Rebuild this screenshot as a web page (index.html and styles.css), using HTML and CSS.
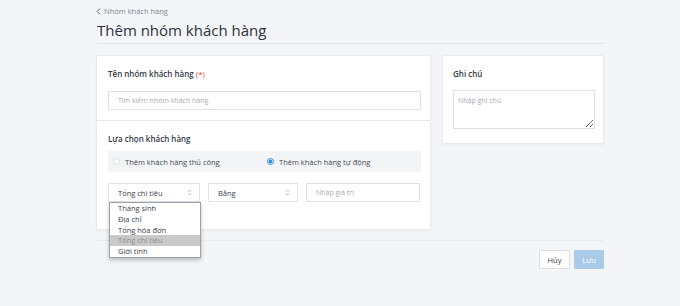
FILE: index.html
```html
<!DOCTYPE html>
<html lang="vi">
<head>
  <meta charset="UTF-8">
  <title>Thêm nhóm khách hàng</title>
  <meta name="viewport" content="width=device-width, initial-scale=1.0">
  <link rel="stylesheet" href="styles.css">
</head>
<body>
  <div class="page">
    <a href="#" class="crumb">
      <svg width="5" height="7" viewBox="0 0 5 7"><path d="M4 0.6 L1.2 3.5 L4 6.4" fill="none" stroke="#5c6470" stroke-width="1"/></svg>
      Nhóm khách hàng
    </a>
    <h1 class="title">Thêm nhóm khách hàng</h1>

    <div class="layout">
      <div class="card main-card">
        <div class="section">
          <div class="label">Tên nhóm khách hàng <span class="req">(*)</span></div>
          <input type="text" class="field" placeholder="Tìm kiếm nhóm khách hàng">
        </div>
        <div class="section">
          <div class="label">Lựa chọn khách hàng</div>
          <div class="radio-box">
            <label class="radio"><span class="dot"></span>Thêm khách hàng thủ công</label>
            <label class="radio checked"><span class="dot"></span>Thêm khách hàng tự động</label>
          </div>
          <div class="filter-row">
            <div class="select sel-field">
              <span>Tổng chi tiêu</span>
              <svg width="5" height="7" viewBox="0 0 5 7"><path d="M1 2.6 L2.5 1 L4 2.6 M1 4.4 L2.5 6 L4 4.4" fill="none" stroke="#9aa0a8" stroke-width="0.8"/></svg>
              <ul class="options">
                <li>Tháng sinh</li>
                <li>Địa chỉ</li>
                <li>Tổng hóa đơn</li>
                <li class="active">Tổng chi tiêu</li>
                <li>Giới tính</li>
              </ul>
            </div>
            <div class="select sel-op">
              <span>Bằng</span>
              <svg width="5" height="7" viewBox="0 0 5 7"><path d="M1 2.6 L2.5 1 L4 2.6 M1 4.4 L2.5 6 L4 4.4" fill="none" stroke="#9aa0a8" stroke-width="0.8"/></svg>
            </div>
            <input type="text" class="field value" placeholder="Nhập giá trị">
          </div>
        </div>
      </div>

      <div class="card note-card">
        <div class="label">Ghi chú</div>
        <textarea class="note" placeholder="Nhập ghi chú"></textarea>
      </div>
    </div>

    <div class="actions">
      <button class="btn cancel">Hủy</button>
      <button class="btn save">Lưu</button>
    </div>
  </div>
</body>
</html>
```

FILE: styles.css
```css
body {
  margin: 0;
  background: #f4f5f8;
  font-family: 'Open Sans', 'Noto Sans', Arial, sans-serif;
  color: #2f3640;
}
.page {
  width: 508px;
  padding: 5px 0 0 96px;
}
.crumb {
  display: flex;
  align-items: center;
  gap: 3px;
  height: 12px;
  font-size: 7.5px;
  color: #7d848e;
  text-decoration: none;
}
.title {
  margin: 0 0 0 1px;
  height: 26px;
  line-height: 26px;
  font-size: 15px;
  font-weight: 500;
  color: #2c323a;
  border-bottom: 1px solid #e2e4e9;
}
.layout {
  display: grid;
  grid-template-columns: 335px 162px;
  gap: 11px;
  align-items: start;
  margin-top: 11px;
}
.card {
  background: #fff;
  border: 1px solid #e8eaee;
  box-shadow: 0 1px 2px rgba(0,0,0,0.04);
}
.main-card {
  height: 175px;
  box-sizing: border-box;
}
.section {
  padding: 13px 10px 10px 11px;
}
.section + .section {
  border-top: 1px solid #e4e6ea;
  padding-top: 13px;
}
.section + .section .label {
  margin-bottom: 7px;
}
.label {
  font-size: 8px;
  font-weight: 600;
  color: #333a44;
  line-height: 10px;
  margin-bottom: 12px;
}
.req {
  color: #e0453a;
  font-weight: 400;
}
.field {
  display: block;
  box-sizing: border-box;
  width: 313px;
  height: 19px;
  border: 1px solid #dcdfe4;
  border-radius: 1px;
  padding: 0 9px;
  font-family: inherit;
  font-size: 7px;
  color: #333;
  background: #fff;
  outline: none;
}
.field::placeholder,
.note::placeholder {
  color: #a7acb3;
}
.radio-box {
  display: flex;
  align-items: center;
  height: 21px;
  width: 313px;
  background: #f3f4f6;
  padding-left: 5px;
  box-sizing: border-box;
}
.radio {
  display: flex;
  align-items: center;
  gap: 5px;
  font-size: 7.5px;
  color: #444b55;
  width: 157px;
}
.dot {
  width: 7px;
  height: 7px;
  border: 1px solid #d6d9de;
  border-radius: 50%;
  background: #fff;
  box-sizing: border-box;
}
.radio.checked .dot {
  border-color: #2c8fe0;
  background: radial-gradient(circle, #2c8fe0 0 1.8px, #fff 2.2px);
}
.filter-row {
  display: flex;
  align-items: center;
  gap: 8px;
  margin-top: 11px;
}
.select {
  position: relative;
  display: flex;
  align-items: center;
  justify-content: space-between;
  box-sizing: border-box;
  height: 19px;
  padding: 0 7px 0 9px;
  border: 1px solid #e1e4e8;
  background: #fff;
  font-size: 7.5px;
  color: #3a414a;
}
.sel-field {
  width: 92px;
}
.sel-op {
  width: 90px;
}
.field.value {
  width: 114px;
  height: 19px;
}
.options {
  position: absolute;
  left: 0;
  top: 18px;
  width: 90px;
  margin: 0;
  padding: 0;
  list-style: none;
  background: #fff;
  border: 1px solid #9da1a7;
  box-shadow: 0 2px 4px rgba(0,0,0,0.25);
  z-index: 2;
}
.options li {
  height: 10.8px;
  line-height: 10.8px;
  padding-left: 8px;
  font-size: 7.5px;
  color: #3a414a;
}
.options li.active {
  background: #c9c9c9;
  color: #8a8d92;
}
.note-card {
  height: 89px;
  box-sizing: border-box;
  padding: 13px 9px 0 10px;
}
.note-card .label {
  margin-bottom: 11px;
}
.note {
  display: block;
  box-sizing: border-box;
  width: 142px;
  height: 39px;
  border: 1px solid #dcdfe4;
  padding: 5px 4px;
  font-family: inherit;
  font-size: 7px;
  resize: vertical;
  outline: none;
}
.actions {
  display: flex;
  justify-content: flex-end;
  gap: 4px;
  margin-top: 10px;
  padding-top: 9px;
  border-top: 1px solid #e8eaee;
}
.btn {
  height: 19px;
  border-radius: 1px;
  font-family: inherit;
  font-size: 7.5px;
  cursor: pointer;
}
.cancel {
  width: 31px;
  background: #fff;
  border: 1px solid #dcdfe4;
  color: #3a414a;
}
.save {
  width: 30px;
  background: #a9cbe7;
  border: 1px solid #a9cbe7;
  color: #fff;
}
```
